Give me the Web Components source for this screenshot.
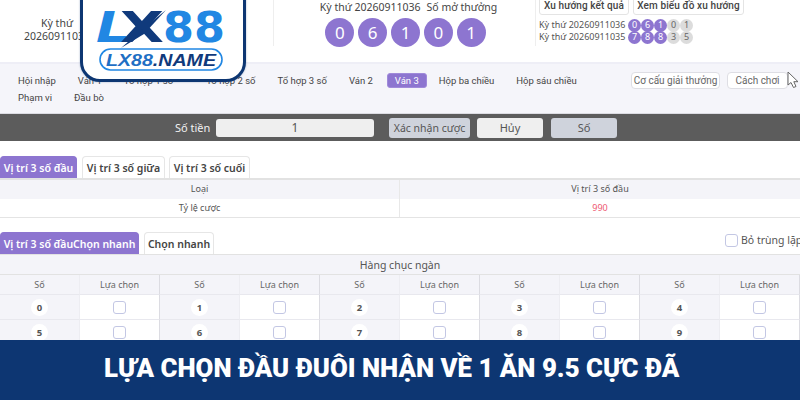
<!DOCTYPE html>
<html lang="vi"><head><meta charset="utf-8"><title>LX88</title>
<style>
html,body{margin:0;width:800px;height:400px;overflow:hidden;background:#fff}
body{font-family:"Noto Sans",sans-serif;color:#444}
</style></head><body>
<lx-page></lx-page>
<script>
function def(name, css, html){
  customElements.define(name, class extends HTMLElement{
    constructor(){super();const r=this.attachShadow({mode:'open'});
      r.innerHTML='<style>'+css+'</style>'+(typeof html==='function'?html(this):html);}
  });
}
def('lx-logo',`:host{position:absolute;left:80px;top:-4px;width:166px;height:86px;box-sizing:border-box;background:#fff;border:3px solid #0d3672;border-radius:0 0 20px 20px;box-shadow:0 0 2px rgba(13,54,114,.4)}
svg{position:absolute;left:-3px;top:-3px;display:block}`,
`<svg width="166" height="86" viewBox="0 0 166 86">
<text x="16" y="46" font-family="'DejaVu Sans','Liberation Sans',sans-serif" font-weight="700" font-size="42" fill="#2187e3" textLength="34" lengthAdjust="spacingAndGlyphs" font-style="italic">L</text>
<text x="40" y="46" font-family="'DejaVu Sans','Liberation Sans',sans-serif" font-weight="700" font-size="42" fill="#103a7c" textLength="44" lengthAdjust="spacingAndGlyphs">X</text>
<path d="M41 52 L70 27 L86 14 L64 38 Z" fill="#103a7c"/>
<text x="83" y="46" font-family="'DejaVu Sans','Liberation Sans',sans-serif" font-weight="700" font-size="42" fill="#2187e3" textLength="62" lengthAdjust="spacingAndGlyphs">88</text>
<rect x="20" y="53" width="122" height="21" rx="10.5" fill="#fff" stroke="#2187e3" stroke-width="1.6"/>
<text x="81" y="69.5" text-anchor="middle" font-family="'Liberation Sans',sans-serif" font-weight="700" font-style="italic" font-size="16" fill="#103a7c" textLength="110" lengthAdjust="spacingAndGlyphs"><tspan fill="#1f6fc4">LX88</tspan>.NAME</text>
</svg>`);
def('lx-ball',`:host{display:inline-flex;align-items:center;justify-content:center;width:var(--d,29px);height:var(--d,29px);border-radius:50%;background:var(--bg,#8d75d0);color:var(--fg,#fff);font-size:var(--fs,17px);flex:none}`,`<slot></slot>`);
def('lx-draw-row',`:host{display:flex;align-items:center;font-size:9px;line-height:12px;height:12px;color:#555}
.t{width:89px;white-space:nowrap}
.b{display:flex;gap:0}
lx-ball{--d:13px;--fs:9px}
.g{--bg:#dcdcdc;--fg:#666}`,
el=>{const d=el.getAttribute('digits').split('');
 return '<span class="t">Kỳ thứ '+el.getAttribute('period')+'</span><span class="b">'+d.map((x,i)=>'<lx-ball class="'+(i>2?'g':'')+'">'+x+'</lx-ball>').join('')+'</span>';});
def('lx-header',`:host{display:grid;grid-template-columns:114px 159px 263px 1fr;height:62px;background:#fff;color:#444}
.c1{text-align:center;font-size:10.5px;line-height:13px;padding-top:17px}
.c2{height:46px;border:solid #eee;border-width:0 1px;display:flex;flex-direction:column;align-items:center;box-sizing:border-box}
.c2 p{margin:0;font-size:10.5px;line-height:14px;white-space:nowrap;padding-left:8px}
.c2 p span{margin-left:6px}
.balls{display:flex;gap:3.8px;margin-top:4px;padding-left:2px}
.c3{padding:0 0 0 3px;box-sizing:border-box;white-space:nowrap}
.btns{display:flex;gap:4px;margin-top:-4px}
.btns span{height:19px;box-sizing:border-box;border:1px solid #e4e4e4;border-radius:3px;font:500 10px Roboto,sans-serif;letter-spacing:.1px;color:#444;display:flex;align-items:center;justify-content:center;white-space:nowrap}
.b1{width:90px}.b2{width:111px}
.rows{margin-top:4px}`,
`<div class="c1">Kỳ thứ<br>20260911036</div><div></div>
<div class="c2"><p>Kỳ thứ 20260911036<span>Số mở thưởng</span></p><div class="balls"><lx-ball>0</lx-ball><lx-ball>6</lx-ball><lx-ball>1</lx-ball><lx-ball>0</lx-ball><lx-ball>1</lx-ball></div></div>
<div class="c3"><div class="btns"><span class="b1">Xu hướng kết quả</span><span class="b2">Xem biểu đồ xu hướng</span></div>
<div class="rows"><lx-draw-row period="20260911036" digits="06101"></lx-draw-row><lx-draw-row period="20260911035" digits="78835"></lx-draw-row></div></div>`);
def('lx-nav',`:host{display:flex;height:51px;box-sizing:border-box;background:#f5f5fa;border-top:2px solid #eeeef6;padding:9px 12px 0 7px;font:9.5px Roboto,sans-serif;color:#444}
ul{list-style:none;margin:0;padding:0;flex:1;min-width:0;display:flex;flex-wrap:wrap;align-content:flex-start;row-gap:1px}
li{padding:0 11px;height:15px;line-height:15px;white-space:nowrap;box-sizing:border-box}
li.sp{margin-left:11px}
li.on{background:#8d75d0;color:#fff;border-radius:3px;margin:0 1px 0 3px;padding:0 7px;border:1px solid #a08ada;line-height:13px}
.r{display:flex;gap:7px;flex:none;margin-top:-1px;font-size:10px}
.r span{height:17px;box-sizing:border-box;border:1px solid #dedee4;background:#fff;border-radius:4px;display:flex;align-items:center;justify-content:center;color:#666;white-space:nowrap}
.a{width:89px}.b{width:61px}
.brk{flex-basis:100%;height:0;padding:0}`,
`<ul><li>Hội nhập</li><li>Ván 1</li><li>Tổ hợp 1 số</li><li class="sp">Tổ hợp 2 số</li><li>Tổ hợp 3 số</li><li>Ván 2</li><li class="on">Ván 3</li><li>Hộp ba chiều</li><li>Hộp sáu chiều</li><li class="brk"></li><li>Phạm vi</li><li>Đầu bò</li></ul>
<div class="r"><span class="a">Cơ cấu giải thưởng</span><span class="b">Cách chơi</span></div>`);
def('lx-cursor',`:host{position:absolute;left:787px;top:71px;width:14px;height:18px}svg{display:block}`,
`<svg width="14" height="18" viewBox="0 0 14 18"><path d="M1 1V14L4 11.5L6.5 16.5L9 15.5L6.8 10.7H11Z" fill="#fff" stroke="#666" stroke-width="1"/></svg>`);
def('lx-betbar',`:host{display:flex;align-items:center;height:28px;box-sizing:border-box;background:#5c5c5c;border-top:1px solid #dcdce2;padding:0 0 0 175px;font-size:11px;color:#555}
.l{color:#f2f2f2;width:41px;white-space:nowrap}
.i{width:158px;height:18px;background:#efefef;border-radius:3px;text-align:center;line-height:18px;font-size:12px;margin-right:15px}
.b{height:20px;margin-right:7px;border-radius:3px;display:flex;align-items:center;justify-content:center;background:#cfd3dc;font-size:10.5px;white-space:nowrap;box-sizing:border-box}
.x{width:81px}.h{width:66px;background:#efefef;margin-right:8px;font-size:11px}.s{width:66px;font-size:11px}`,
`<span class="l">Số tiền</span><div class="i">1</div><div class="b x">Xác nhận cược</div><div class="b h">Hủy</div><div class="b s">Số</div>`);
def('lx-tab',`:host{display:flex;align-items:center;justify-content:center;height:22px;box-sizing:border-box;border:1px solid #e6e6e6;border-bottom:0;border-radius:4px 4px 0 0;background:#fff;color:#444;font-size:10.5px;font-weight:600;white-space:nowrap;width:var(--w)}
:host([active]){background:#8d75d0;color:#fff;border-color:#8d75d0}`,`<slot></slot>`);
def('lx-tabs',`:host{display:flex;gap:5px;align-items:flex-end}`,`<slot></slot>`);
def('lx-odds',`:host{display:grid;grid-template-columns:399px 1fr;border-top:2px solid #e2e2e2;border-bottom:1px solid #e4e4e4;font-size:9px;color:#555;text-align:center}
div{height:18.5px;line-height:18px;box-sizing:border-box}
.h{background:#f4f4f9}.b{border-left:1px solid #e8e8e8}
.r{color:#ee5a72}`,
`<div class="h">Loại</div><div class="h b">Vị trí 3 số đầu</div><div>Tỷ lệ cược</div><div class="b r">990</div>`);
def('lx-check',`:host{display:inline-block;width:13px;height:13px;box-sizing:border-box;border:1px solid #c3c7e4;border-radius:3px;background:#fff;flex:none}`,``);
def('lx-numgrid',`:host{display:grid;grid-template-columns:repeat(10,80px);grid-template-rows:20px 20px 25px 25px;border-top:1px solid #e2e2e2;font-size:9px;color:#555;text-align:center;background:#fff}
.top{grid-column:1/-1;background:#f4f4f9;font-size:10.5px;line-height:20px;border-bottom:1px solid #e2e2e2;box-sizing:border-box}
.c{display:flex;align-items:center;justify-content:center;box-sizing:border-box;border-bottom:1px solid #e8e8ee}
.n{background:#f4f4f9}
.hd{background:#f4f4f9;color:#666}
.l{border-right:1px solid #dcdce2}
.m{border-right:1px solid #ededf2}
.d{width:17px;height:17px;border-radius:50%;background:#fff;font-weight:700;font-size:9.5px;line-height:17px;color:#555}`,
()=>{let s='<div class="top">Hàng chục ngàn</div>';
 for(let i=0;i<5;i++)s+='<div class="c hd m">Số</div><div class="c hd l">Lựa chọn</div>';
 for(let r=0;r<2;r++)for(let i=0;i<5;i++)s+='<div class="c n m"><span class="d">'+(r*5+i)+'</span></div><div class="c l"><lx-check></lx-check></div>';
 return s;});
def('lx-banner',`:host{display:flex;align-items:center;height:60px;flex:none;box-sizing:border-box;background:#0d3672;color:#fff;padding:0 0 4px 104px;font-family:Roboto,sans-serif;font-weight:900;font-size:25.8px;white-space:nowrap}`,`<slot></slot>`);
def('lx-page',`:host{display:flex;flex-direction:column;width:800px;height:400px;position:relative;overflow:hidden}
main{flex:1;min-height:0;overflow:hidden;background:#fff}
.t1{padding-top:15px}
.sel{display:flex;justify-content:space-between;align-items:flex-start;margin-top:14px;height:22px}
.dup{display:flex;align-items:center;gap:3px;font-size:10.5px;width:75px;white-space:nowrap;color:#555;margin-top:1px;overflow:hidden}
`,
`<lx-header></lx-header><lx-nav></lx-nav><lx-betbar></lx-betbar>
<main><div class="t1"><lx-tabs><lx-tab active style="--w:77px">Vị trí 3 số đầu</lx-tab><lx-tab style="--w:83px">Vị trí 3 số giữa</lx-tab><lx-tab style="--w:81px;margin-left:-1px">Vị trí 3 số cuối</lx-tab></lx-tabs></div>
<lx-odds></lx-odds>
<div class="sel"><lx-tabs><lx-tab active style="--w:139px">Vị trí 3 số đầuChọn nhanh</lx-tab><lx-tab style="--w:70px">Chọn nhanh</lx-tab></lx-tabs>
<div class="dup"><lx-check></lx-check><span>Bỏ trùng lặp</span></div></div>
<lx-numgrid></lx-numgrid></main>
<lx-banner>LỰA CHỌN ĐẦU ĐUÔI NHẬN VỀ 1 ĂN 9.5 CỰC ĐÃ</lx-banner>
<lx-logo></lx-logo><lx-cursor></lx-cursor>`);
</script>
</body></html>
